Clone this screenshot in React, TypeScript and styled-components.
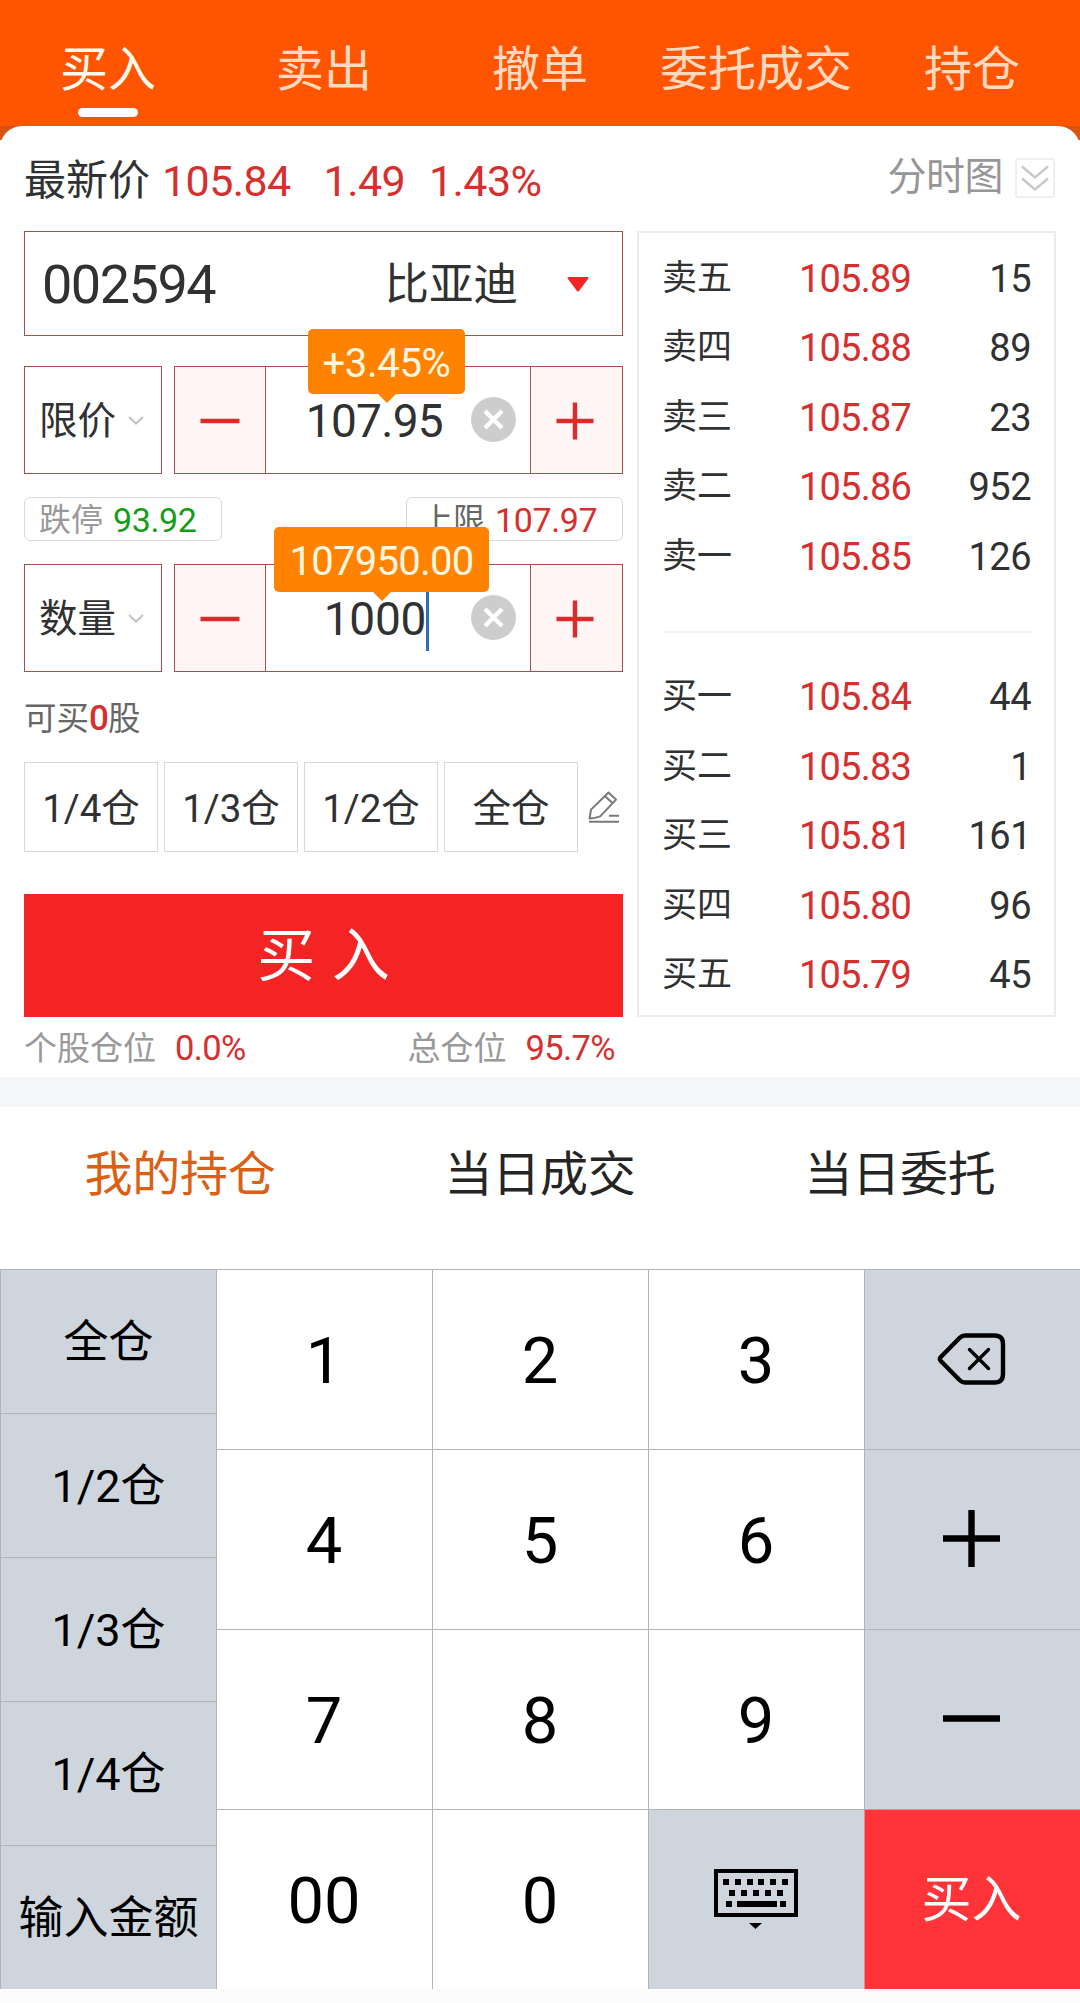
import React from "react";
import styled, { createGlobalStyle } from "styled-components";

const GlobalStyle = createGlobalStyle`
  *, *::before, *::after { box-sizing: border-box; }
  body {
    margin: 0;
    background: #fcfcfc;
    font-family: Roboto, "Noto Sans CJK SC", sans-serif;
    color: #303132;
  }
  button { font: inherit; color: inherit; background: none; border: 0; padding: 0; margin: 0; }
  svg { display: block; flex: none; }
`;

const RED = "#d62f2f";
const FRAME = "#ac4c4c";
const RULE = "#b1b3b6";

const Screen = styled.div`
  width: 1080px;
  height: 2003px;
  overflow: hidden;
  display: flex;
  flex-direction: column;
`;

/* ---------- top tabs ---------- */

const Header = styled.header`
  height: 140px;
  flex: none;
  background: linear-gradient(#ff5500 126px, #d8540f 126px);
`;

const HeaderTabs = styled.nav`
  height: 126px;
  display: grid;
  grid-template-columns: repeat(5, 216px);
`;

const HeaderTab = styled.button<{ $active?: boolean }>`
  display: flex;
  flex-direction: column;
  align-items: center;
  padding-top: 34px;
  font-size: 48px;
  line-height: 72px;
  white-space: nowrap;
  color: ${(p) => (p.$active ? "#fffaf0" : "#ffd9c0")};
  &::after {
    content: "";
    width: 60px;
    height: 9px;
    margin-top: 2px;
    border-radius: 5px;
    background: ${(p) => (p.$active ? "#fff" : "transparent")};
  }
`;

/* ---------- trading card ---------- */

const Card = styled.main`
  height: 951px;
  flex: none;
  margin-top: -14px;
  background: #fff;
  border-radius: 22px 22px 0 0;
  padding: 0 24px;
`;

const QuoteBar = styled.div`
  height: 105px;
  display: flex;
  align-items: center;
  padding: 4px 1px 0 0;
  font-size: 42px;
  line-height: 60px;
`;

const QuoteNumber = styled.span<{ $left: number; $track?: number }>`
  margin-left: ${(p) => p.$left}px;
  font-size: 43px;
  letter-spacing: ${(p) => p.$track ?? 0}px;
  color: ${RED};
`;

const ChartToggle = styled.button`
  margin-left: auto;
  display: flex;
  align-items: center;
  gap: 12px;
  margin-top: -8px;
  font-size: 39px;
  letter-spacing: -0.5px;
  color: #959697;
`;

const ToggleBox = styled.span`
  width: 40px;
  height: 40px;
  border: 2px solid #efefef;
  border-radius: 3px;
  display: grid;
  place-items: center;
  margin-top: 3px;
`;

const Columns = styled.div`
  display: grid;
  grid-template-columns: 599px 419px;
  gap: 14px;
`;

const Form = styled.section`
  display: flex;
  flex-direction: column;
`;

const StockField = styled.div`
  height: 105px;
  border: 1px solid ${FRAME};
  display: flex;
  align-items: center;
  padding: 2px 33px 0 17px;
`;

const StockCode = styled.span`
  font-size: 54px;
  line-height: 60px;
  letter-spacing: -1.5px;
`;

const StockName = styled.span`
  margin-left: auto;
  margin-right: 49px;
  font-size: 44.5px;
  line-height: 60px;
`;

const FieldRow = styled.div<{ $top: number }>`
  margin-top: ${(p) => p.$top}px;
  height: 108px;
  display: grid;
  grid-template-columns: 138px 449px;
  gap: 12px;
`;

const KindSelect = styled.button`
  border: 1px solid ${FRAME};
  display: flex;
  align-items: center;
  justify-content: space-between;
  padding: 1px 17px 0 14px;
  font-size: 38.5px;
  line-height: 50px;
`;

const Stepper = styled.div`
  border: 1px solid ${FRAME};
  display: grid;
  grid-template-columns: 91px 1fr 92px;
`;

const StepButton = styled.button<{ $side: "left" | "right" }>`
  background: #fff5f4;
  border-${(p) => (p.$side === "left" ? "right" : "left")}: 1px solid ${FRAME};
  padding-right: ${(p) => (p.$side === "left" ? 0 : 3)}px;
  display: grid;
  place-items: center;
`;

const ValueCell = styled.div`
  position: relative;
  display: flex;
  align-items: center;
  justify-content: flex-end;
  padding: 0 14px 2px 0;
`;

const Value = styled.span<{ $right: number; $track?: number }>`
  margin-right: ${(p) => p.$right}px;
  padding-top: 4px;
  font-size: 46px;
  line-height: 60px;
  letter-spacing: ${(p) => p.$track ?? 0}px;
`;

const Caret = styled.i`
  position: absolute;
  left: 160px;
  top: 25px;
  width: 3px;
  height: 61px;
  background: #2f70b2;
`;

const Bubble = styled.div<{ $left: number; $width: number; $track: number }>`
  position: absolute;
  z-index: 2;
  left: ${(p) => p.$left}px;
  top: -38px;
  width: ${(p) => p.$width}px;
  height: 65px;
  border-radius: 5px;
  background: #ff8200;
  color: #fff8e0;
  font-size: 40px;
  line-height: 70px;
  letter-spacing: ${(p) => p.$track}px;
  text-align: center;
  &::after {
    content: "";
    position: absolute;
    left: 50%;
    bottom: -9px;
    margin-left: -10px;
    border: solid transparent;
    border-width: 10px 10px 0;
    border-top-color: #ff8200;
  }
`;

const Limits = styled.div`
  margin-top: 23px;
  height: 44px;
  display: flex;
  justify-content: space-between;
`;

const Limit = styled.div<{ $width: number; $left: number; $tone: string }>`
  width: ${(p) => p.$width}px;
  padding: 2px 0 0 ${(p) => p.$left}px;
  border: 1px solid #d6dadd;
  border-radius: 6px;
  display: flex;
  align-items: center;
  gap: 10px;
  white-space: nowrap;
  font-size: 32px;
  line-height: 42px;
  color: ${(p) => p.$tone};
`;

const LimitValue = styled.span<{ $tone: string }>`
  font-size: 34px;
  letter-spacing: -0.4px;
  color: ${(p) => p.$tone};
`;

const Affordable = styled.p`
  margin: 23px 0 0 0;
  font-size: 32.5px;
  line-height: 48px;
  color: #666;
  b { font-size: 35px; font-weight: 500; color: ${RED}; letter-spacing: -1px; }
`;

const Fractions = styled.div`
  margin-top: 19px;
  height: 90px;
  display: grid;
  grid-template-columns: repeat(4, 134px) 1fr;
  column-gap: 6px;
`;

const Fraction = styled.button`
  border: 1px solid #d6d9db;
  display: grid;
  place-items: center;
  padding-top: 3px;
  font-size: 38.5px;
  line-height: 50px;
`;

const EditButton = styled.button`
  display: grid;
  place-items: center;
`;

const Submit = styled.button`
  margin-top: 42px;
  height: 123px;
  background: #f42424;
  color: #fff;
  font-size: 58px;
  line-height: 80px;
  word-spacing: 2px;
`;

const Positions = styled.div`
  display: flex;
  justify-content: space-between;
  padding: 7px 8px 0 0;
  font-size: 33px;
  line-height: 48px;
  color: #999;
`;

const Percent = styled.span`
  margin-left: 19px;
  font-size: 34.5px;
  letter-spacing: -0.6px;
  color: ${RED};
`;

/* ---------- order book ---------- */

const Book = styled.section`
  height: 786px;
  border: 2px solid #e9ebec;
  padding: 10px 22px 0 23px;
`;

const BookRow = styled.div`
  height: 69.5px;
  display: grid;
  grid-template-columns: 137px 1fr auto;
  align-items: center;
  padding: 2px 1px 0 0;
  font-size: 35px;
  line-height: 50px;
`;

const BookPrice = styled.span`
  font-size: 38px;
  letter-spacing: -0.8px;
  color: ${RED};
`;

const BookSize = styled.span`
  font-size: 38px;
  letter-spacing: -0.5px;
`;

const BookDivider = styled.hr`
  margin: 40px 0 29px;
  border: 0;
  height: 2px;
  background: #f3f4f5;
`;

/* ---------- record tabs ---------- */

const Records = styled.nav`
  height: 192px;
  flex: none;
  border-top: 30px solid #f6f7f9;
  background: #fff;
  display: grid;
  grid-template-columns: repeat(3, 1fr);
`;

const RecordTab = styled.button<{ $active?: boolean }>`
  align-self: start;
  padding-top: 32px;
  font-size: 48px;
  line-height: 72px;
  letter-spacing: -0.3px;
  color: ${(p) => (p.$active ? "#d96014" : "#252525")};
`;

/* ---------- keypad ---------- */

const Keypad = styled.section`
  height: 720px;
  flex: none;
  display: grid;
  grid-template-columns: 216px 864px;
`;

const Shortcuts = styled.div`
  display: grid;
  grid-template-rows: repeat(5, 144px);
`;

const Keys = styled.div`
  display: grid;
  grid-template-columns: repeat(4, 216px);
  grid-template-rows: repeat(4, 180px);
`;

const Key = styled.button<{ $kind?: "digit" | "tool" | "buy" | "short" }>`
  border: solid ${(p) => (p.$kind === "buy" ? "#e98c90" : RULE)};
  border-width: 1px 0 0 1px;
  display: grid;
  place-items: center;
  color: ${(p) => (p.$kind === "buy" ? "#fff" : "#000")};
  background: ${(p) =>
    p.$kind === "buy" ? "#ff3438" : p.$kind === "digit" ? "#fff" : "#ced5dd"};
  font-size: ${(p) => (p.$kind === "digit" ? 65 : p.$kind === "buy" ? 50 : 45)}px;
  line-height: 1.4;
  padding: ${(p) =>
    p.$kind === "tool" ? "0 2px 2px 0" : p.$kind === "buy" ? "0 2px 0 0" : p.$kind === "digit" ? "4px 1px 0 0" : "2px 0 0"};
`;

/* ---------- icons ---------- */

const DoubleChevron = () => (
  <svg width="28" height="26" viewBox="0 0 28 26" fill="none" stroke="#c9c9c9" strokeWidth="2.4">
    <path d="M1 1.5 14 12.5 27 1.5M1 13.5 14 24.5 27 13.5" />
  </svg>
);

const DownTriangle = () => (
  <svg width="22" height="15" viewBox="0 0 22 15" fill="#f32424">
    <path d="M1.6 0h18.8q1.4.4.8 1.8L12 14q-1 1.2-2 0L.8 1.8Q.2.4 1.6 0Z" />
  </svg>
);

const SmallChevron = () => (
  <svg width="16" height="9" viewBox="0 0 16 9" fill="none" stroke="#c4c4c4" strokeWidth="2.2">
    <path d="m1 1 7 6.5L15 1" />
  </svg>
);

const Minus = () => (
  <svg width="40" height="40" viewBox="0 0 40 40" stroke="#dc2b2b" strokeWidth="4.4">
    <path d="M.5 21h39" />
  </svg>
);

const Plus = () => (
  <svg width="38" height="40" viewBox="0 0 38 40" stroke="#dc2b2b" strokeWidth="4.4">
    <path d="M.5 21h37M19 2.5v37" />
  </svg>
);

const Clear = () => (
  <svg width="45" height="45" viewBox="0 0 45 45">
    <circle cx="22.5" cy="22.5" r="22.5" fill="#cdcdcd" />
    <path d="m14 14 17 17M31 14 14 31" stroke="#fff" strokeWidth="4.4" />
  </svg>
);

const Pencil = () => (
  <svg width="32" height="32" viewBox="0 0 32 32" fill="none" stroke="#77797b" strokeWidth="2">
    <path d="M20.500 1.500 28 8.600 12.200 25.400Q6.500 27.400 1.600 27.400L3 18.600Z" strokeLinejoin="round" />
    <path d="m17.400 5.600 7 6.400M21 24.800h10M1 30.800h30" />
  </svg>
);

const Backspace = () => (
  <svg width="70" height="52" viewBox="0 0 70 52" fill="none" stroke="#000" strokeLinecap="round" strokeLinejoin="round">
    <path strokeWidth="4.4" d="M28 2.500h29.500q8.500 0 8.500 8.500v30q0 8.500-8.500 8.500H28q-3 0-5.200-2.200L3.800 28Q2 26 3.800 24L22.800 4.700Q25 2.500 28 2.500Z" />
    <path strokeWidth="3.4" d="m32.500 16.500 19 19M51.500 16.500l-19 19" />
  </svg>
);

const KeyPlus = () => (
  <svg width="57" height="57" viewBox="0 0 57 57" stroke="#000" strokeWidth="6.4">
    <path d="M0 28.500h57M28.500 0v57" />
  </svg>
);

const KeyMinus = () => (
  <svg width="57" height="57" viewBox="0 0 57 57" stroke="#000" strokeWidth="6.4">
    <path d="M0 28.500h57" />
  </svg>
);

const Keyboard = () => (
  <svg width="84" height="60" viewBox="0 0 84 60" fill="#000">
    <rect x="2" y="2" width="80" height="44" fill="none" stroke="#000" strokeWidth="4" />
    {[9, 21, 33, 44, 56, 68].map((x) => (
      <rect key={x} x={x} y="10" width="6" height="6" />
    ))}
    {[15, 27, 39, 51, 63].map((x) => (
      <rect key={x} x={x} y="21" width="6" height="6" />
    ))}
    <path d="M12 32h6v6h-6zM23 32h40v6H23zM66 32h6v6h-6zM35 54h13l-6.500 6z" />
  </svg>
);

/* ---------- data ---------- */

const headerTabs = ["买入", "卖出", "撤单", "委托成交", "持仓"];
const recordTabs = ["我的持仓", "当日成交", "当日委托"];
const fractions = ["1/4仓", "1/3仓", "1/2仓", "全仓"];
const shortcuts = ["全仓", "1/2仓", "1/3仓", "1/4仓", "输入金额"];

const asks = [
  ["卖五", "105.89", "15"],
  ["卖四", "105.88", "89"],
  ["卖三", "105.87", "23"],
  ["卖二", "105.86", "952"],
  ["卖一", "105.85", "126"],
];

const bids = [
  ["买一", "105.84", "44"],
  ["买二", "105.83", "1"],
  ["买三", "105.81", "161"],
  ["买四", "105.80", "96"],
  ["买五", "105.79", "45"],
];

const Level = ({ row }: { row: string[] }) => (
  <BookRow>
    <span>{row[0]}</span>
    <BookPrice>{row[1]}</BookPrice>
    <BookSize>{row[2]}</BookSize>
  </BookRow>
);

export default function App() {
  return (
    <Screen>
      <GlobalStyle />
      <Header>
        <HeaderTabs>
          {headerTabs.map((t, i) => (
            <HeaderTab key={t} $active={i === 0}>{t}</HeaderTab>
          ))}
        </HeaderTabs>
      </Header>

      <Card>
        <QuoteBar>
          <span>最新价</span>
          <QuoteNumber $left={12} $track={-0.6}>105.84</QuoteNumber>
          <QuoteNumber $left={33} $track={-0.6}>1.49</QuoteNumber>
          <QuoteNumber $left={24} $track={-0.6}>1.43%</QuoteNumber>
          <ChartToggle>
            分时图
            <ToggleBox><DoubleChevron /></ToggleBox>
          </ChartToggle>
        </QuoteBar>

        <Columns>
          <Form>
            <StockField>
              <StockCode>002594</StockCode>
              <StockName>比亚迪</StockName>
              <DownTriangle />
            </StockField>

            <FieldRow $top={30}>
              <KindSelect>限价<SmallChevron /></KindSelect>
              <Stepper>
                <StepButton $side="left"><Minus /></StepButton>
                <ValueCell>
                  <Value $right={28} $track={-0.7}>107.95</Value>
                  <Clear />
                  <Bubble $left={42} $width={157} $track={-0.3}>+3.45%</Bubble>
                </ValueCell>
                <StepButton $side="right"><Plus /></StepButton>
              </Stepper>
            </FieldRow>

            <Limits>
              <Limit $width={198} $left={14} $tone="#999">
                跌停<LimitValue $tone="#169c16">93.92</LimitValue>
              </Limit>
              <Limit $width={217} $left={14} $tone="#666">
                上限<LimitValue $tone={RED}>107.97</LimitValue>
              </Limit>
            </Limits>

            <FieldRow $top={23}>
              <KindSelect>数量<SmallChevron /></KindSelect>
              <Stepper>
                <StepButton $side="left"><Minus /></StepButton>
                <ValueCell>
                  <Value $right={45} $track={-0.3}>1000</Value>
                  <Caret />
                  <Clear />
                  <Bubble $left={8} $width={215} $track={-0.7}>107950.00</Bubble>
                </ValueCell>
                <StepButton $side="right"><Plus /></StepButton>
              </Stepper>
            </FieldRow>

            <Affordable>可买<b>0</b>股</Affordable>

            <Fractions>
              {fractions.map((f) => (
                <Fraction key={f}>{f}</Fraction>
              ))}
              <EditButton><Pencil /></EditButton>
            </Fractions>

            <Submit>买 入</Submit>

            <Positions>
              <span>个股仓位<Percent>0.0%</Percent></span>
              <span>总仓位<Percent>95.7%</Percent></span>
            </Positions>
          </Form>

          <Book>
            {asks.map((r) => <Level key={r[0]} row={r} />)}
            <BookDivider />
            {bids.map((r) => <Level key={r[0]} row={r} />)}
          </Book>
        </Columns>
      </Card>

      <Records>
        {recordTabs.map((t, i) => (
          <RecordTab key={t} $active={i === 0}>{t}</RecordTab>
        ))}
      </Records>

      <Keypad>
        <Shortcuts>
          {shortcuts.map((s) => (
            <Key key={s} $kind="short">{s}</Key>
          ))}
        </Shortcuts>
        <Keys>
          <Key $kind="digit">1</Key>
          <Key $kind="digit">2</Key>
          <Key $kind="digit">3</Key>
          <Key $kind="tool"><Backspace /></Key>
          <Key $kind="digit">4</Key>
          <Key $kind="digit">5</Key>
          <Key $kind="digit">6</Key>
          <Key $kind="tool"><KeyPlus /></Key>
          <Key $kind="digit">7</Key>
          <Key $kind="digit">8</Key>
          <Key $kind="digit">9</Key>
          <Key $kind="tool"><KeyMinus /></Key>
          <Key $kind="digit">00</Key>
          <Key $kind="digit">0</Key>
          <Key $kind="tool"><Keyboard /></Key>
          <Key $kind="buy">买入</Key>
        </Keys>
      </Keypad>
    </Screen>
  );
}
